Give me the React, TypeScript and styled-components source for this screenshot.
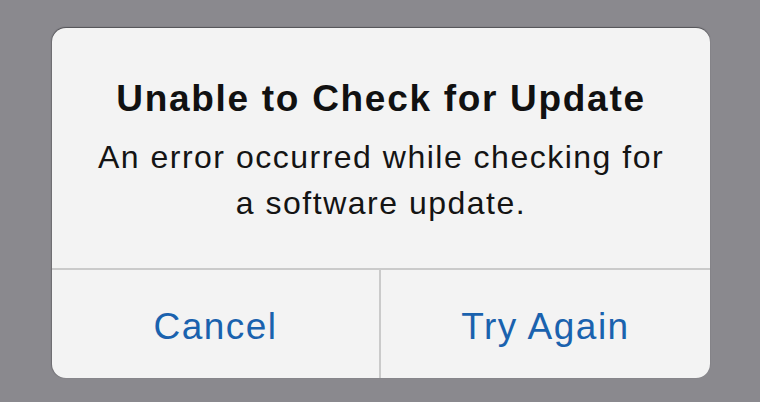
import React from "react";
import styled, { createGlobalStyle } from "styled-components";

const Global = createGlobalStyle`
  html, body {
    margin: 0;
    padding: 0;
    background: #8a898e;
  }
  body {
    font-family: "Liberation Sans", Arial, sans-serif;
  }
`;

const Page = styled.div`
  width: 760px;
  height: 402px;
  box-sizing: border-box;
  padding: 28px 50px 0 52px;
  background: #8a898e;
`;

const Dialog = styled.div`
  width: 658px;
  height: 350px;
  background: #f3f3f3;
  border-radius: 14px;
  box-shadow: 0 -1px 1px rgba(40, 40, 44, 0.55), -1px 0 1px rgba(40, 40, 44, 0.25);
  display: flex;
  flex-direction: column;
  overflow: hidden;
`;

const Body = styled.div`
  height: 242px;
  box-sizing: border-box;
  padding-top: 49px;
  display: flex;
  flex-direction: column;
  align-items: center;
  border-bottom: 2px solid #cacaca;
`;

const Title = styled.div`
  font-size: 37px;
  line-height: 44px;
  font-weight: 700;
  letter-spacing: 1.7px;
  color: #111;
  text-align: center;
`;

const Message = styled.div`
  margin-top: 13px;
  font-size: 32px;
  line-height: 46px;
  letter-spacing: 1.5px;
  color: #141414;
  text-align: center;
`;

const Actions = styled.div`
  flex: 1;
  display: grid;
  grid-template-columns: 329px 1fr;
`;

const Action = styled.button<{ $divider?: boolean }>`
  border: none;
  background: transparent;
  margin: 0;
  padding: 6px 0 0 0;
  font-family: "Liberation Sans", Arial, sans-serif;
  font-size: 37px;
  letter-spacing: 1.5px;
  color: #1a62ae;
  display: flex;
  align-items: center;
  justify-content: center;
  border-right: ${(p) => (p.$divider ? "2px solid #cacaca" : "none")};
  cursor: pointer;
`;

export default function App() {
  return (
    <>
      <Global />
      <Page>
        <Dialog>
          <Body>
            <Title>Unable to Check for Update</Title>
            <Message>
              An error occurred while checking for
              <br />a software update.
            </Message>
          </Body>
          <Actions>
            <Action $divider>Cancel</Action>
            <Action>Try Again</Action>
          </Actions>
        </Dialog>
      </Page>
    </>
  );
}
